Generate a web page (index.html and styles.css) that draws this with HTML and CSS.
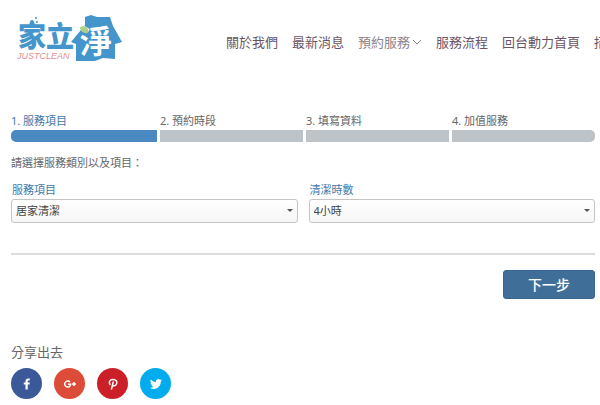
FILE: index.html
```
<!DOCTYPE html>
<html lang="zh-Hant">

<head>
    <meta charset="UTF-8">
    <meta name="viewport" content="width=device-width, initial-scale=1.0">
    <title>家立淨 預約服務</title>
    <link rel="stylesheet" href="styles.css">
</head>

<body>
    <header class="header">
        <a href="#" class="logo" aria-label="家立淨 JUSTCLEAN">
            <svg width="106" height="50" viewBox="0 0 106 50">
                <!-- 泡泡 -->
                <circle cx="19" cy="5" r="1" fill="#4495cc" />
                <circle cx="15" cy="9" r="2" fill="#4495cc" />
                <circle cx="20" cy="9" r="1" fill="#4495cc" />
                <text class="logo_name" x="1" y="34">家立</text>
                <!-- 房子 -->
                <path fill="#4495cc" d="M54 29 L68 12 V4 L74 2 L80 4 L93 4 L96 13 L105 29 L98 31 V46 L86 45 L78 48 L59 48 L59 31 Z" />
                <text class="logo_jing" x="63" y="40">淨</text>
                <path fill="#a8d18a" d="M63 14 Q69 12 71 16 Q72 21 68 20 Q63 19 63 14 Z" />
                <text class="logo_en" x="0" y="46">JUSTCLEAN</text>
            </svg>
        </a>
        <nav class="nav">
            <a href="#">關於我們</a>
            <a href="#">最新消息</a>
            <a href="#" class="current">預約服務<svg width="10" height="6" viewBox="0 0 10 6"><path d="M1 1 L5 5 L9 1" fill="none" stroke="#8c8488" /></svg></a>
            <a href="#">服務流程</a>
            <a href="#">回台動力首頁</a>
            <a href="#">招募</a>
        </nav>
    </header>

    <main class="main">
        <ol class="steps">
            <li class="on">1. 服務項目</li>
            <li>2. 預約時段</li>
            <li>3. 填寫資料</li>
            <li>4. 加值服務</li>
        </ol>

        <form class="form">
            <p>請選擇服務類別以及項目：</p>
            <div class="fields">
                <div class="field">
                    <label for="item">服務項目</label>
                    <div class="select">
                        <select id="item">
                            <option>居家清潔</option>
                        </select>
                    </div>
                </div>
                <div class="field">
                    <label for="hours">清潔時數</label>
                    <div class="select">
                        <select id="hours">
                            <option>4小時</option>
                        </select>
                    </div>
                </div>
            </div>
            <div class="actions">
                <button type="button">下一步</button>
            </div>
        </form>

        <section class="share">
            <h2>分享出去</h2>
            <div class="share_links">
                <a href="#" class="facebook" aria-label="Facebook">
                    <svg width="12" height="12" viewBox="0 0 24 24"><path fill="#fff" d="M9 23V13H5.500V9H9V6.200C9 2.800 11 1 14.200 1h3.300v4h-2.300c-1.300 0-1.700.6-1.700 1.800V9h4l-.5 4h-3.500v10z" /></svg>
                </a>
                <a href="#" class="google" aria-label="Google+">
                    <svg width="12" height="12" viewBox="0 0 24 24"><path fill="none" stroke="#fff" stroke-width="3" d="M12 8A6 6 0 1 0 13.500 12.500H8" /><path stroke="#fff" stroke-width="3" d="M20 8v8M16 12h8" /></svg>
                </a>
                <a href="#" class="pinterest" aria-label="Pinterest">
                    <svg width="12" height="12" viewBox="0 0 24 24"><path fill="none" stroke="#fff" stroke-width="3" stroke-linecap="round" d="M6 13C3 9 5 3 12 3s9 5 7 9-7 5-8 2M12.500 8L9 22" /></svg>
                </a>
                <a href="#" class="twitter" aria-label="Twitter">
                    <svg width="12" height="12" viewBox="0 0 24 24"><path fill="#fff" d="M24 4.600a10 10 0 0 1-2.800.8 5 5 0 0 0 2.100-2.700 10 10 0 0 1-3.100 1.200 4.900 4.900 0 0 0-8.400 4.500A14 14 0 0 1 1.700 3.100a4.900 4.900 0 0 0 1.500 6.600 5 5 0 0 1-2.200-.6 4.900 4.900 0 0 0 3.900 4.900 5 5 0 0 1-2.200.1 4.900 4.900 0 0 0 4.600 3.400A9.900 9.900 0 0 1 0 19.500a14 14 0 0 0 21.500-12.400A10 10 0 0 0 24 4.600z" /></svg>
                </a>
            </div>
        </section>
    </main>
</body>

</html>
```
FILE: styles.css
```
* {
    margin: 0;
    padding: 0;
    box-sizing: border-box;
}

body {
    overflow-x: hidden;
    background-color: #fff;
    color: #666;
    font-family: "Noto Sans", "Noto Sans CJK TC", sans-serif;
    font-size: 11px;
    line-height: 16px;
}

a {
    text-decoration: none;
}

.header {
    display: flex;
    align-items: center;
    justify-content: space-between;
    height: 84px;
    padding-left: 17px;
    overflow: hidden;
}

.logo {
    flex: none;
    height: 58px;
}

.logo svg {
    display: block;
}

.logo text {
    font-family: "Noto Sans CJK TC", sans-serif;
    font-weight: 900;
}

.logo .logo_name {
    fill: #4495cc;
    font-size: 28px;
}

.logo .logo_jing {
    fill: #fff;
    font-size: 32px;
    font-weight: 700;
}

.logo .logo_en {
    fill: #dc8f98;
    font-family: "Liberation Sans", sans-serif;
    font-size: 9px;
    font-style: italic;
    font-weight: 400;
}

.nav {
    display: flex;
    flex: none;
    gap: 14px;
    margin-right: -20px;
}

.nav a {
    color: #6b5564;
    font-size: 13px;
    white-space: nowrap;
}

.nav .current {
    color: #8c8488;
}

.nav svg {
    margin: 0 0 2px 2px;
}

.main {
    padding: 29px 5px 0 11px;
}

.steps {
    display: flex;
    gap: 3px;
    list-style: none;
}

.steps li {
    flex: 1;
}

.steps li:first-child {
    flex-basis: 3px;
}

.steps li::after {
    content: "";
    display: block;
    height: 12px;
    margin-top: 1px;
    background-color: #bdc3c7;
}

.steps li:first-child::after {
    border-radius: 5px 0 0 5px;
}

.steps li:last-child::after {
    border-radius: 0 5px 5px 0;
}

.steps .on {
    color: #3f78a8;
}

.steps .on::after {
    background-color: #4a89c0;
}

.form p {
    margin-top: 13px;
}

.fields {
    display: flex;
    gap: 11px;
    margin-top: 11px;
    padding-bottom: 30px;
    border-bottom: 2px solid #ddd;
}

.field {
    flex: 1;
}

.field label {
    display: block;
    margin-bottom: 1px;
    padding-left: 1px;
    color: #3f78a8;
}

.select {
    position: relative;
}

.select::after {
    content: "";
    position: absolute;
    top: 10px;
    right: 5px;
    border: 3px solid transparent;
    border-top-color: #555;
    pointer-events: none;
}

.select select {
    display: block;
    width: 100%;
    height: 24px;
    padding: 0 4px;
    border: 1px solid #c4c4c4;
    border-radius: 3px;
    background: linear-gradient(#fff, #f6f6f6);
    color: #444;
    font: inherit;
    appearance: none;
}

.actions {
    margin-top: 15px;
    text-align: right;
}

.actions button {
    width: 92px;
    height: 29px;
    border: 1px solid #386690;
    border-radius: 3px;
    background-color: #3f6f98;
    color: #fff;
    font-family: inherit;
    font-size: 14px;
    font-weight: 500;
    line-height: 20px;
}

.share {
    margin-top: 45px;
}

.share h2 {
    font-size: 13px;
    font-weight: 400;
}

.share_links {
    display: flex;
    gap: 12px;
    margin-top: 8px;
}

.share_links a {
    display: flex;
    align-items: center;
    justify-content: center;
    width: 31px;
    height: 31px;
    border-radius: 50%;
}

.facebook {
    background-color: #3b5998;
}

.google {
    background-color: #dd4b39;
}

.pinterest {
    background-color: #cb2027;
}

.twitter {
    background-color: #00acee;
}
```
